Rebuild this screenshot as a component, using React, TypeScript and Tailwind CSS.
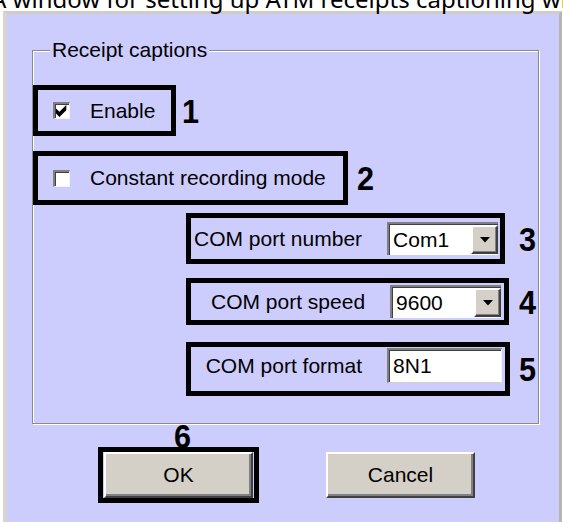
import React from "react";

function Check({ checked }: { checked: boolean }) {
  return (
    <span className="flex h-[17px] w-[17px] shrink-0 items-center justify-center border-t-2 border-l-2 border-r border-b border-t-[#808080] border-l-[#808080] border-r-[#f4f4f4] border-b-[#f4f4f4] bg-white shadow-[inset_1px_1px_0_#404040]">
      {checked && (
        <svg width="12" height="12" viewBox="0 0 7 7" className="block">
          <polygon points="0,2 2,4 6,0 6,3 2,7 0,5" fill="#000" />
        </svg>
      )}
    </span>
  );
}

function Arrow() {
  return (
    <span className="flex h-full w-[27px] shrink-0 items-center justify-center border-t-2 border-l-2 border-r-2 border-b-2 border-t-white border-l-white border-r-[#404040] border-b-[#404040] bg-[#d4d0c8] shadow-[inset_-1px_-1px_0_#808080]">
      <svg width="10" height="6" viewBox="0 0 10 6" className="block">
        <polygon points="0,0 10,0 5,5.5" fill="#000" />
      </svg>
    </span>
  );
}

function Combo({ value }: { value: string }) {
  return (
    <div className="flex h-[33px] w-[111px] shrink-0 border-t-2 border-l-2 border-t-[#808080] border-l-[#808080] bg-white py-[1px] shadow-[inset_1px_1px_0_#404040]">
      <span className="flex-1 pl-[4px] text-[21px] leading-[29px]">{value}</span>
      <Arrow />
    </div>
  );
}

const numCls =
  "inline-block origin-left scale-x-90 font-['Liberation_Sans',Arial,sans-serif] font-bold text-[34px] leading-none text-black";

export default function App() {
  return (
    <div className="h-[522px] w-[563px] overflow-hidden bg-white font-['Liberation_Sans',Arial,sans-serif] text-black">
      <div className="flex h-[11px] items-start">
        <div className="-mt-[17px] ml-[-9px] whitespace-nowrap font-['Noto_Sans',sans-serif] text-[24px] leading-[32px] text-black">
          A window for setting up ATM receipts captioning window
        </div>
      </div>

      <div className="ml-[3px] h-[511px] w-[559px] border-t-[3px] border-l-[4px] border-r-[3px] border-t-[#d0cdc8] border-l-[#d8d5d0] border-r-[#b8b5b0] bg-[#ccccfd] pt-[36px]">
        {/* group box */}
        <div className="relative ml-[25px] w-[507px] border border-[#8a8a8a] pt-[34px] pb-[27px] shadow-[inset_1px_1px_0_#ffffff,1px_1px_0_#ffffff]">
          <span className="absolute -top-[13px] left-[17px] bg-[#ccccfd] px-[2px] text-[21px] leading-[24px]">
            Receipt captions
          </span>

          <div className="flex items-center">
            <div className="flex h-[51px] w-[143px] items-center gap-[20px] border-[5px] border-black pl-[15px]">
              <Check checked />
              <span className="text-[21px] leading-[24px]">Enable</span>
            </div>
            <span className={`ml-[6px] ${numCls}`}>1</span>
          </div>

          <div className="mt-[15px] flex items-center">
            <div className="flex h-[54px] w-[315px] items-center gap-[20px] border-[5px] border-black pl-[15px]">
              <Check checked={false} />
              <span className="text-[21px] leading-[24px]">Constant recording mode</span>
            </div>
            <span className={`ml-[9px] ${numCls}`}>2</span>
          </div>

          <div className="mt-[8px] flex items-center pl-[153px]">
            <div className="flex h-[51px] w-[329px] items-center justify-end gap-[25px] border-[5px] border-black pr-[2px]">
              <span className="text-[21px] leading-[24px]">COM port number</span>
              <Combo value="Com1" />
            </div>
            <span className={`ml-[14px] ${numCls}`}>3</span>
          </div>

          <div className="mt-[14px] flex items-center pl-[153px]">
            <div className="flex h-[47px] w-[330px] items-center justify-end gap-[25px] border-[5px] border-black pr-[3px]">
              <span className="text-[21px] leading-[24px]">COM port speed</span>
              <Combo value="9600" />
            </div>
            <span className={`ml-[10px] ${numCls}`}>4</span>
          </div>

          <div className="mt-[17px] flex items-center pl-[153px]">
            <div className="flex h-[54px] w-[334px] items-start justify-end gap-[25px] border-[5px] border-black pr-[3px] pt-[1px]">
              <span className="mt-[6px] text-[21px] leading-[24px]">COM port format</span>
              <div className="h-[35px] w-[115px] border-t-2 border-l-2 border-r border-b border-t-[#808080] border-l-[#808080] border-r-[#f4f4f4] border-b-[#d4d0c8] bg-white pl-[4px] text-[21px] leading-[31px] shadow-[inset_1px_1px_0_#404040]">
                8N1
              </div>
            </div>
            <span className={`ml-[9px] ${numCls}`}>5</span>
          </div>
        </div>

        {/* buttons */}
        <div className="mt-[23px] ml-[91px] flex items-center">
          <div className="relative border-[5px] border-black px-[1px]">
            <span className={`absolute -top-[33px] left-[71px] ${numCls}`}>6</span>
            <button className="block h-[46px] w-[149px] border-2 border-t-white border-l-white border-r-[#404040] border-b-[#404040] bg-[#d4d0c8] text-[21px] leading-[24px] text-black shadow-[inset_-2px_-2px_0_#808080]">
              OK
            </button>
          </div>
          <button className="ml-[67px] block h-[46px] w-[149px] border-2 border-t-white border-l-white border-r-[#404040] border-b-[#404040] bg-[#d4d0c8] text-[21px] leading-[24px] text-black shadow-[inset_-2px_-2px_0_#808080]">
            Cancel
          </button>
        </div>
      </div>
    </div>
  );
}
